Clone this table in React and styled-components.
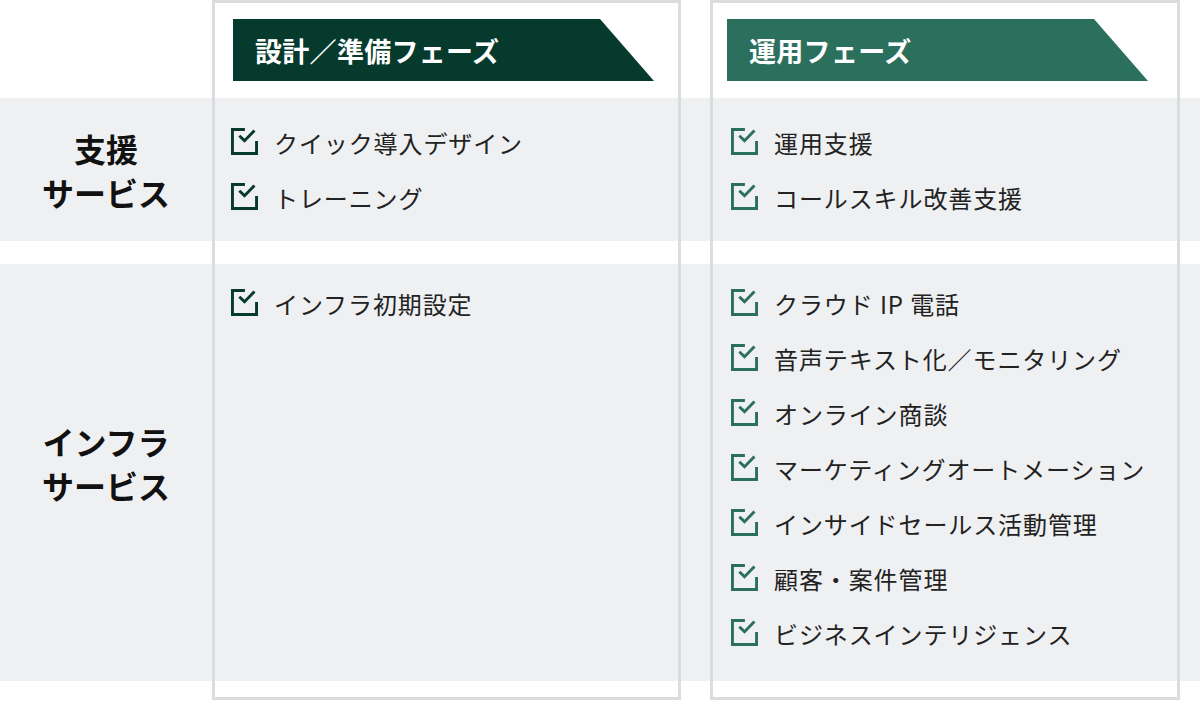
import React from 'react';
import styled, { createGlobalStyle } from 'styled-components';

const GlobalStyle = createGlobalStyle`
  html, body {
    margin: 0;
    padding: 0;
    background: #ffffff;
  }
  body {
    font-family: "Noto Sans CJK JP", "Noto Sans", sans-serif;
    color: #222222;
  }
`;

const phases = [
  {
    title: '設計／準備フェーズ',
    color: '#063a2d',
    inset: 19,
    bannerInset: 21,
    support: ['クイック導入デザイン', 'トレーニング'],
    infra: ['インフラ初期設定'],
  },
  {
    title: '運用フェーズ',
    color: '#2b6f5d',
    inset: 21,
    bannerInset: 17,
    support: ['運用支援', 'コールスキル改善支援'],
    infra: [
      'クラウド IP 電話',
      '音声テキスト化／モニタリング',
      'オンライン商談',
      'マーケティングオートメーション',
      'インサイドセールス活動管理',
      '顧客・案件管理',
      'ビジネスインテリジェンス',
    ],
  },
];

// grid columns: label | phase 1 | gap | phase 2 | margin
const Matrix = styled.div`
  display: grid;
  grid-template-columns: 212px 469px 29px 470px 20px;
  grid-template-rows: 98px 143px 23px 417px 19px;
  width: 1200px;
`;

const Band = styled.div`
  grid-column: 1 / -1;
  grid-row: ${(p) => p.row};
  background: #eff0f2;
`;

const Frame = styled.div`
  grid-column: ${(p) => p.col};
  grid-row: 1 / -1;
  border: 3px solid #dadcde;
  box-sizing: border-box;
  z-index: 2;
  pointer-events: none;
`;

const Banner = styled.div`
  grid-column: ${(p) => p.col};
  grid-row: 1;
  align-self: start;
  margin-top: 19px;
  margin-left: ${(p) => p.inset}px;
  width: 421px;
  height: 62px;
  box-sizing: border-box;
  padding-left: 22px;
  display: flex;
  align-items: center;
  background: ${(p) => p.color};
  clip-path: polygon(0 0, 367px 0, 100% 100%, 0 100%);
  color: #ffffff;
  font-size: 27px;
  font-weight: 700;
  letter-spacing: 0.3px;
  line-height: 1;
`;

const RowLabel = styled.div`
  grid-column: 1;
  grid-row: ${(p) => p.row};
  display: flex;
  align-items: center;
  justify-content: center;
  text-align: center;
  padding-bottom: ${(p) => p.lift}px;
  font-size: 32px;
  font-weight: 700;
  line-height: 44px;
  color: #111111;
  z-index: 1;
`;

const ItemList = styled.ul`
  grid-column: ${(p) => p.col};
  grid-row: ${(p) => p.row};
  list-style: none;
  margin: 0;
  padding: ${(p) => p.top}px 0 0 ${(p) => p.inset}px;
  z-index: 1;
`;

const Item = styled.li`
  display: flex;
  align-items: center;
  gap: 16px;
  height: 55px;
  font-size: 24px;
  letter-spacing: 0.9px;
  line-height: 1;
  color: #222222;
  white-space: nowrap;
`;

const CheckIcon = styled.svg`
  flex: none;
  width: 27px;
  height: 27px;
  margin-top: -3px;
`;

const Check = ({ color }) => (
  <CheckIcon viewBox="0 0 26 26" fill="none" stroke={color} strokeWidth="2.8">
    <path d="M12 1.4H1.4V24.6H24.6V14" strokeLinecap="square" />
    <path d="M8 7.5L13 12.2L22.6 2.4" strokeLinejoin="miter" />
  </CheckIcon>
);

const App = () => (
  <>
    <GlobalStyle />
    <Matrix>
      <Band row={2} />
      <Band row={4} />

      <RowLabel row={2} lift={-6}>
        支援
        <br />
        サービス
      </RowLabel>
      <RowLabel row={4} lift={20}>
        インフラ
        <br />
        サービス
      </RowLabel>

      {phases.map((phase, i) => {
        const col = i === 0 ? 2 : 4;
        return (
          <React.Fragment key={phase.title}>
            <Banner col={col} inset={phase.bannerInset} color={phase.color}>
              {phase.title}
            </Banner>
            <ItemList col={col} row={2} top={17} inset={phase.inset}>
              {phase.support.map((label) => (
                <Item key={label}>
                  <Check color={phase.color} />
                  {label}
                </Item>
              ))}
            </ItemList>
            <ItemList col={col} row={4} top={12} inset={phase.inset}>
              {phase.infra.map((label) => (
                <Item key={label}>
                  <Check color={phase.color} />
                  {label}
                </Item>
              ))}
            </ItemList>
            <Frame col={col} />
          </React.Fragment>
        );
      })}
    </Matrix>
  </>
);

export default App;
